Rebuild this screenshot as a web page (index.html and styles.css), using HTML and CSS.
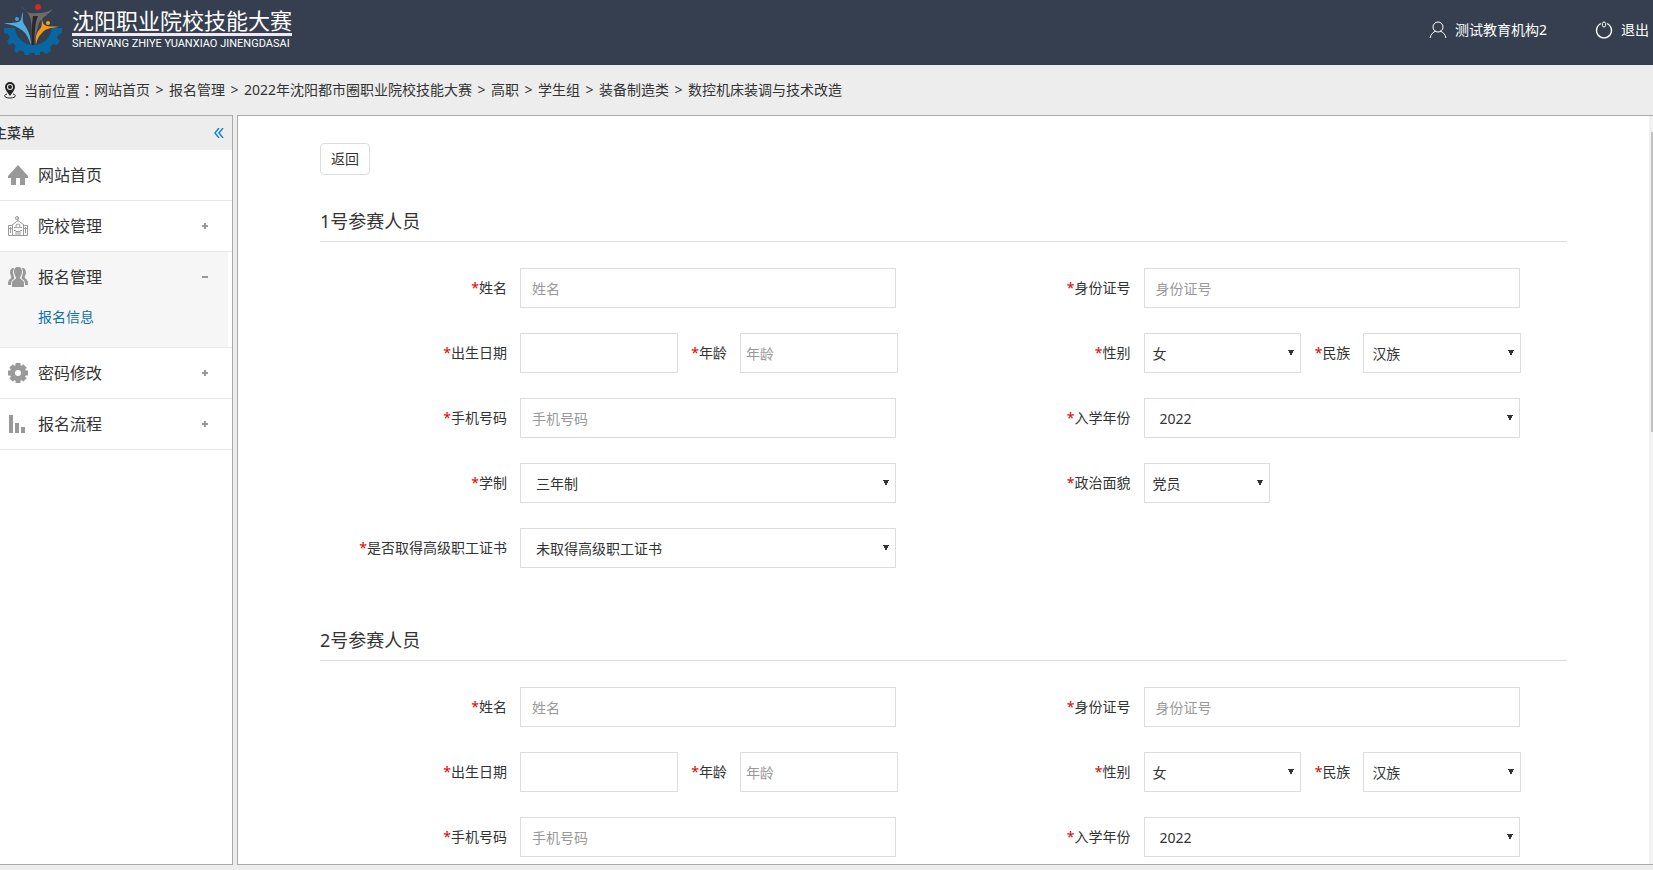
FILE: index.html
```html
<!DOCTYPE html>
<html lang="zh-CN">
<head>
    <meta charset="UTF-8">
    <meta name="viewport" content="width=device-width, initial-scale=1.0">
    <title>沈阳职业院校技能大赛</title>
    <link rel="stylesheet" href="styles.css">
</head>
<body>
    <header class="header">
        <a href="#" class="logo">
            <svg class="logo-icon" viewBox="0 0 60 52" aria-hidden="true">
                <path fill="#0867a3" d="M0 24 L11 24 C12 34 20 41 29 41 C39 41 47 34 48 24 L58 24 L58 29 L54 31 L53 34 L56 37 L53 41 L49 40 L46 43 L47 47 L42 50 L38 47 L36 48 L36 51 L31 51 L31 49 L26 49 L25 51 L21 51 L20 48 L16 46 L12 49 L10 46 L12 42 L9 39 L5 41 L3 37 L6 34 L4 30 L0 29 Z"/>
                <circle cx="34" cy="3" r="3" fill="#d42a20"/>
                <path fill="#6c6a6b" d="M17 2 C22 9 27 10 34 9 C41 9 45 7 49 5 C44 11 38 13 35 19 C33 26 31 32 30 41 L28 41 C27 31 28 25 27 17 C26 10 22 7 17 2 Z"/>
                <path fill="#29292c" d="M29 12 L34 12 C31 18 31 27 30 41 L28 41 C27 29 28 20 29 12 Z"/>
                <circle cx="13" cy="15" r="2" fill="#3ba0dc"/>
                <path fill="#51addf" d="M19 8 C19 14 18 16 20 20 C24 26 27 32 27 41 C24 33 22 28 16 25 C11 21 6 21 0 19 C7 19 13 19 16 17 C18 15 17 12 19 8 Z"/>
                <circle cx="44" cy="19" r="2" fill="#f5a51d"/>
                <path fill="#f39a18" d="M38 13 C38 18 39 21 43 22 C47 23 50 22 55 23 C47 24 42 24 38 29 C34 33 33 36 32 41 C31 34 32 29 36 25 C39 21 37 18 38 13 Z"/>
            </svg>
            <span class="logo-text">
                <span class="logo-cn">沈阳职业院校技能大赛</span>
                <span class="logo-en">SHENYANG ZHIYE YUANXIAO JINENGDASAI</span>
            </span>
        </a>
        <div class="user-bar">
            <a href="#">
                <svg width="18" height="18" viewBox="0 0 18 18" fill="none" stroke="#fff" aria-hidden="true"><circle cx="9" cy="6" r="5"/><path d="M1 17 C2 13 4 11 7 10 M11 10 C14 11 16 13 17 17"/></svg>
                测试教育机构2
            </a>
            <a href="#">
                <svg width="18" height="18" viewBox="0 0 18 18" fill="none" stroke="#fff" aria-hidden="true"><path stroke-width="1.3" d="M6 2.5 A7.5 7.5 0 1 0 12 2.5"/><rect x="7.5" y="1" width="3" height="5" rx="1.5"/></svg>
                退出
            </a>
        </div>
    </header>

    <nav class="breadcrumb">
        <svg width="14" height="18" viewBox="0 0 14 18" aria-hidden="true">
            <path fill="none" stroke="#222" d="M4 13 C0 14 1 17 7 17 C13 17 14 14 10 13"/>
            <path fill="#222" fill-rule="evenodd" d="M7 1 A5 5 0 0 0 2 6 C2 9 5 12 7 15 C9 12 12 9 12 6 A5 5 0 0 0 7 1 Z M7 3 A3 3 0 1 1 7 9 A3 3 0 1 1 7 3 Z"/>
            <circle cx="7" cy="6" r="2" fill="#222"/>
        </svg>
        <span>当前位置<span class="colon" lang="zh-TW">：</span></span>
        <a href="#">网站首页</a><i>&gt;</i>
        <a href="#">报名管理</a><i>&gt;</i>
        <a href="#">2022年沈阳都市圈职业院校技能大赛</a><i>&gt;</i>
        <a href="#">高职</a><i>&gt;</i>
        <a href="#">学生组</a><i>&gt;</i>
        <a href="#">装备制造类</a><i>&gt;</i>
        <a href="#">数控机床装调与技术改造</a>
    </nav>

    <div class="wrap">
        <aside class="sidebar">
            <div class="menu-title">
                <span>主菜单</span>
                <button type="button" class="collapse" aria-label="收起菜单">
                    <svg width="10" height="10" viewBox="0 0 10 10" fill="none" stroke="#1584d8" stroke-width="1.5" aria-hidden="true"><path d="M5 0 L1 5 L5 10 M9 0 L5 5 L9 10"/></svg>
                </button>
            </div>
            <ul class="menu">
                <li>
                    <a href="#" class="menu-link">
                        <svg width="20" height="20" viewBox="0 0 20 20" fill="#999" aria-hidden="true"><path d="M10 0 L20 11 V13 H17 V20 H12 V13 H8 V20 H3 V13 H0 V11 Z"/></svg>
                        网站首页
                    </a>
                </li>
                <li>
                    <a href="#" class="menu-link">
                        <svg width="20" height="20" viewBox="0 0 20 20" fill="none" stroke="#999" aria-hidden="true"><circle cx="9" cy="2" r="1.5"/><path d="M10 1 V5 M4 9 L10 4.500 L16 9 M4.500 8.500 V19 M15.500 8.500 V19 M.5 19.500 V9.500 H4 M16 9.500 H19.500 V19.500 H.5 M8 19 V15.500 H12 V19 M10 16 V19 M2.500 11 V17 M17.500 11 V17 M1 12.500 H4 M16 12.500 H19 M6 11.500 H8 M12 11.500 H14 M6 14.500 H8 M12 14.500 H14"/><circle cx="10" cy="10" r="2"/></svg>
                        院校管理
                        <span class="plus"></span>
                    </a>
                </li>
                <li class="active">
                    <a href="#" class="menu-link">
                        <svg width="20" height="20" viewBox="0 0 20 20" fill="#999" aria-hidden="true"><path d="M10 0 C7 0 6 2 6 5 C6 8 8 9 8 11 C7 13 4 13 4 16 V20 H16 V16 C16 13 13 13 12 11 C12 9 14 8 14 5 C14 2 13 0 10 0 Z"/><path d="M6 1 C3 1 2 3 2 6 C2 8 4 9 3 11 C1 13 0 13 0 18 H3 C3 14 4 13 6 12 C7 10 5 8 5 5 Z M14 1 C17 1 18 3 18 6 C18 8 16 9 17 11 C19 13 20 13 20 18 H17 C17 14 16 13 14 12 C13 10 15 8 15 5 Z"/></svg>
                        报名管理
                        <span class="minus"></span>
                    </a>
                    <a href="#" class="sub-link">报名信息</a>
                </li>
                <li>
                    <a href="#" class="menu-link">
                        <svg width="20" height="20" viewBox="0 0 20 20" aria-hidden="true"><circle cx="10" cy="10" r="5.500" fill="none" stroke="#999" stroke-width="5"/><path stroke="#999" stroke-width="5" d="M10 0 V4 M10 16 V20 M0 10 H4 M16 10 H20 M3 3 L5 5 M15 15 L17 17 M3 17 L5 15 M15 5 L17 3"/></svg>
                        密码修改
                        <span class="plus"></span>
                    </a>
                </li>
                <li>
                    <a href="#" class="menu-link">
                        <svg width="20" height="20" viewBox="0 0 20 20" fill="#999" aria-hidden="true"><path d="M1 1 H5 V19 H1 Z M7 9 H11 V19 H7 Z M13 13 H17 V19 H13 Z"/></svg>
                        报名流程
                        <span class="plus"></span>
                    </a>
                </li>
            </ul>
        </aside>

        <main class="main">
            <form class="content">
                <button type="button" class="back-btn">返回</button>

                <section class="person">
                    <h2>1号参赛人员</h2>
                    <div class="fields">
                        <div class="field">
                            <label for="name1"><em>*</em>姓名</label>
                            <input type="text" id="name1" placeholder="姓名">
                        </div>
                        <div class="field">
                            <label for="idcard1"><em>*</em>身份证号</label>
                            <input type="text" id="idcard1" placeholder="身份证号">
                        </div>
                        <div class="field">
                            <label for="birth1"><em>*</em>出生日期</label>
                            <input type="text" id="birth1" class="half">
                            <label for="age1" class="label-sm"><em>*</em>年龄</label>
                            <input type="text" id="age1" class="half" placeholder="年龄">
                        </div>
                        <div class="field">
                            <label for="sex1"><em>*</em>性别</label>
                            <select id="sex1" class="half"><option>女</option><option>男</option></select>
                            <label for="nation1" class="label-sm"><em>*</em>民族</label>
                            <select id="nation1" class="half"><option>汉族</option></select>
                        </div>
                        <div class="field">
                            <label for="phone1"><em>*</em>手机号码</label>
                            <input type="text" id="phone1" placeholder="手机号码">
                        </div>
                        <div class="field">
                            <label for="year1"><em>*</em>入学年份</label>
                            <select id="year1"><option>2022</option></select>
                        </div>
                        <div class="field">
                            <label for="length1"><em>*</em>学制</label>
                            <select id="length1"><option>三年制</option></select>
                        </div>
                        <div class="field">
                            <label for="politics1"><em>*</em>政治面貌</label>
                            <select id="politics1" class="short"><option>党员</option></select>
                        </div>
                        <div class="field">
                            <label for="cert1"><em>*</em>是否取得高级职工证书</label>
                            <select id="cert1"><option>未取得高级职工证书</option></select>
                        </div>
                    </div>
                </section>

                <section class="person">
                    <h2>2号参赛人员</h2>
                    <div class="fields">
                        <div class="field">
                            <label for="name2"><em>*</em>姓名</label>
                            <input type="text" id="name2" placeholder="姓名">
                        </div>
                        <div class="field">
                            <label for="idcard2"><em>*</em>身份证号</label>
                            <input type="text" id="idcard2" placeholder="身份证号">
                        </div>
                        <div class="field">
                            <label for="birth2"><em>*</em>出生日期</label>
                            <input type="text" id="birth2" class="half">
                            <label for="age2" class="label-sm"><em>*</em>年龄</label>
                            <input type="text" id="age2" class="half" placeholder="年龄">
                        </div>
                        <div class="field">
                            <label for="sex2"><em>*</em>性别</label>
                            <select id="sex2" class="half"><option>女</option><option>男</option></select>
                            <label for="nation2" class="label-sm"><em>*</em>民族</label>
                            <select id="nation2" class="half"><option>汉族</option></select>
                        </div>
                        <div class="field">
                            <label for="phone2"><em>*</em>手机号码</label>
                            <input type="text" id="phone2" placeholder="手机号码">
                        </div>
                        <div class="field">
                            <label for="year2"><em>*</em>入学年份</label>
                            <select id="year2"><option>2022</option></select>
                        </div>
                    </div>
                </section>
            </form>
            <div class="scrollbar"><div class="thumb"></div></div>
        </main>
    </div>
</body>
</html>
```

FILE: styles.css
```css
* {
    box-sizing: border-box;
}
body {
    margin: 0;
    height: 100vh;
    display: flex;
    flex-direction: column;
    overflow: hidden;
    background: #ededed;
    color: #333;
    font-family: "Noto Sans", "Noto Sans CJK SC", sans-serif;
    font-size: 14px;
    line-height: 20px;
}
a {
    color: inherit;
    text-decoration: none;
}
svg {
    flex: none;
}

/* header */
.header {
    flex: none;
    height: 65px;
    display: flex;
    align-items: center;
    justify-content: space-between;
    background: #353f4f;
    color: #fff;
}
.logo {
    display: flex;
    align-items: center;
    gap: 8px;
    padding: 0 0 5px 4px;
}
.logo-icon {
    width: 60px;
    height: 52px;
}
.logo-text {
    display: flex;
    flex-direction: column;
}
.logo-cn {
    font-size: 22px;
    line-height: 25px;
    border-bottom: 3px solid #eee8f5;
}
.logo-en {
    font-family: Roboto, sans-serif;
    font-size: 11px;
    line-height: 16px;
}
.user-bar {
    display: flex;
    gap: 48px;
    padding: 0 4px 6px 0;
}
.user-bar a {
    display: flex;
    align-items: center;
    gap: 8px;
}

/* breadcrumb */
.breadcrumb {
    flex: none;
    height: 50px;
    display: flex;
    align-items: center;
    padding-left: 3px;
}
.breadcrumb svg {
    margin-right: 7px;
}
.breadcrumb i {
    width: 19px;
    font-style: normal;
    text-align: center;
}
.colon {
    font-family: "Noto Sans CJK TC", sans-serif;
}

.wrap {
    flex: 1;
    min-height: 0;
    display: flex;
    gap: 4px;
    padding-bottom: 5px;
}

/* sidebar */
.sidebar {
    flex: none;
    width: 233px;
    background: #fff;
    border: 1px solid #aaa;
    border-left: 0;
}
.menu-title {
    height: 34px;
    display: flex;
    align-items: center;
    justify-content: space-between;
    padding-right: 8px;
    background: #ededed;
    font-weight: 500;
}
.menu-title span {
    margin-left: -7px;
}
.collapse {
    display: flex;
    padding: 0;
    border: 0;
    background: none;
}
.menu {
    list-style: none;
    margin: 0;
    padding: 0;
}
.menu li {
    border-bottom: 1px solid #e8e8e8;
}
.menu-link {
    display: flex;
    align-items: center;
    gap: 10px;
    height: 50px;
    padding: 0 24px 0 8px;
    font-size: 16px;
}
.menu .active {
    background: linear-gradient(#f6f6f6, #f6f6f6) no-repeat;
    background-size: 228px 100%;
}
.sub-link {
    display: block;
    padding: 5px 0 20px 38px;
    color: #0b70aa;
}
.plus,
.minus {
    width: 6px;
    height: 6px;
    margin-left: auto;
    background: linear-gradient(#999, #999) center / 6px 2px no-repeat;
}
.plus {
    background: linear-gradient(#999, #999) center / 6px 2px no-repeat,
                linear-gradient(#999, #999) center / 2px 6px no-repeat;
}

/* main */
.main {
    flex: 1;
    min-width: 0;
    display: flex;
    background: #fff;
    border: 1px solid #aaa;
    border-right: 0;
    overflow: hidden;
}
.content {
    flex: 1;
    padding: 27px 82px 0;
}
.scrollbar {
    flex: none;
    width: 4px;
    padding: 16px 0 0 2px;
    background: #f1f1f1;
}
.thumb {
    height: 41%;
    background: #c1c1c1;
}
.back-btn {
    display: block;
    width: 50px;
    height: 32px;
    padding: 0;
    border: 1px solid #ddd;
    border-radius: 4px;
    background: #fff;
    color: #333;
    font: inherit;
}
.person {
    padding: 26px 0 52px;
}
.person + .person {
    padding: 0;
}
.person h2 {
    margin: 0 0 26px;
    height: 41px;
    line-height: 40px;
    border-bottom: 1px solid #ddd;
    font-size: 18px;
    font-weight: 400;
}
.fields {
    display: grid;
    grid-template-columns: 1fr 1fr;
    row-gap: 25px;
}
.field {
    display: flex;
    align-items: center;
}
.field label {
    flex: none;
    width: 200px;
    padding-right: 13px;
    text-align: right;
}
.field .label-sm {
    width: 62px;
}
.field em {
    color: #e00000;
    font-style: normal;
}
.field input,
.field select {
    width: calc(60% + 2px);
    height: 40px;
    padding: 0 11px;
    border: 1px solid #ddd;
    border-radius: 0;
    background: #fff;
    color: #333;
    font: inherit;
}
.field select {
    appearance: none;
    padding: 2px 15px 0;
    background: #fff conic-gradient(from -27deg at 50% 100%, #333 54deg, transparent 0) right 6px center / 6px 6px no-repeat;
}
.field .half {
    width: calc(25% + 2px);
    padding-left: 5px;
}
.field .short {
    width: calc(20% + 2px);
}
.field select.half,
.field select.short {
    padding-left: 8px;
}
.field input::placeholder {
    color: #999;
    opacity: 1;
}
```
